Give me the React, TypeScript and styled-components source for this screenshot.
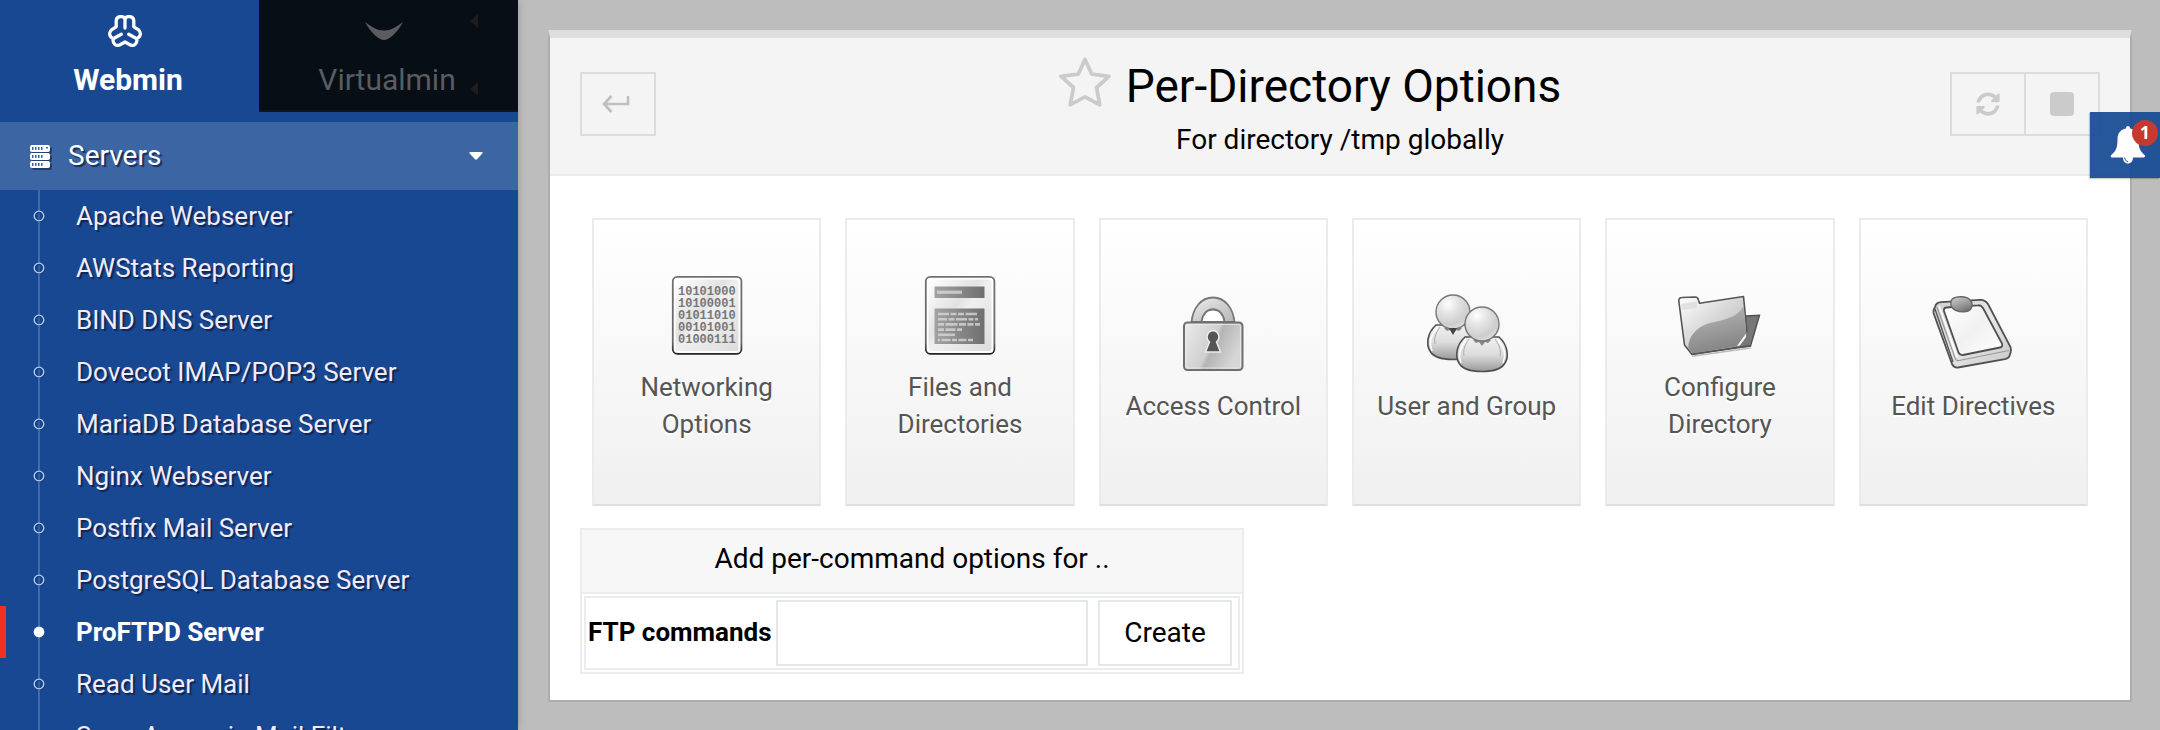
import React from "react";
import styled, { createGlobalStyle, css } from "styled-components";
import { FaSyncAlt } from "react-icons/fa";

const GlobalStyle = createGlobalStyle`
  *, *::before, *::after { box-sizing: border-box; }
  html, body { margin: 0; background: #bdbdbd; }
  body {
    font-family: Roboto, "Liberation Sans", sans-serif;
    font-size: 26px;
    line-height: 37px;
    color: #000;
  }
  button, input { font-family: inherit; }
  a { color: inherit; text-decoration: none; }
`;

const Page = styled.div`
  display: flex;
  align-items: flex-start;
  height: 100vh;
  overflow: hidden;
`;

/* ---------- sidebar ---------- */

const Sidebar = styled.nav`
  flex: 0 0 518px;
  height: 100vh;
  overflow: hidden;
  background: #194893;
  box-shadow: 0 0 8px rgba(0, 0, 0, 0.2);
`;

const Tabs = styled.div`
  display: flex;
  height: 122px;
  align-items: flex-start;
`;

const Tab = styled.button<{ $active?: boolean }>`
  position: relative;
  flex: 1;
  display: flex;
  flex-direction: column;
  align-items: center;
  height: 112px;
  padding: 12px 3px 0 0;
  border: 0;
  font-size: 30px;
  line-height: 40px;
  background: ${(p) => (p.$active ? "#194893" : "#070e15")};
  color: ${(p) => (p.$active ? "#fff" : "#5a5c5f")};
  font-weight: ${(p) => (p.$active ? 700 : 400)};
  ${(p) => !p.$active && css`border-bottom: 2px solid #10161d;`}
`;

const TabIcon = styled.span`
  display: flex;
  align-items: center;
  height: 38px;
  margin: 0 7px 10px 0;
`;

const TabMarks = styled.span`
  position: absolute;
  top: 14px;
  right: 40px;
  display: flex;
  flex-direction: column;
  gap: 54px;
`;

const Category = styled.a`
  display: flex;
  align-items: center;
  height: 68px;
  padding: 0 35px 0 30px;
  background: #3c65a4;
  color: #fff;
  font-size: 28px;
  text-shadow: 2px 2px 1px rgba(10, 24, 54, 0.7);

  & > span { flex: 1; margin-left: 18px; padding-bottom: 2px; }
`;

const ServerGlyph = styled.svg`
  filter: drop-shadow(2px 2px 0 rgba(10, 24, 54, 0.5));
`;

const Modules = styled.ul`
  margin: 0;
  padding: 0;
  list-style: none;
`;

const Module = styled.li<{ $current?: boolean }>`
  height: 52px;
  border-left: 6px solid ${(p) => (p.$current ? "#ee3124" : "transparent")};
  color: ${(p) => (p.$current ? "#fff" : "#f1ebfa")};
  font-weight: ${(p) => (p.$current ? 700 : 400)};
  text-shadow: ${(p) => (p.$current ? "none" : "2px 2px 1px rgba(10, 24, 54, 0.7)")};

  & > a {
    display: flex;
    align-items: center;
    height: 52px;
    padding-left: 27px;
    gap: 31px;
  }
`;

/* ---------- main panel ---------- */

const Main = styled.main`
  flex: 1;
  min-width: 0;
  padding: 30px 28px 28px 30px;
`;

const Panel = styled.section`
  background: #fff;
  border: 2px solid #adadad;
  border-top: 8px solid #dedede;
  border-radius: 2px;
`;

const PanelHeader = styled.header`
  display: grid;
  grid-template-columns: 1fr auto 1fr;
  align-items: start;
  min-height: 138px;
  padding: 0 30px;
  background: #f4f4f4;
  border-bottom: 2px solid #ebebeb;
`;

const Headings = styled.div`
  padding-top: 19px;
  text-align: center;
`;

const TitleRow = styled.div`
  display: flex;
  align-items: flex-start;
  gap: 15px;
  padding-right: 60px;
`;

const Title = styled.h1`
  margin: 2px 0 7px;
  font-size: 46px;
  line-height: 54px;
  font-weight: 400;
  white-space: nowrap;
`;

const Subtitle = styled.p`
  margin: 0;
  font-size: 28px;
  line-height: 40px;
`;

const StarButton = styled.button`
  display: flex;
  padding: 0;
  border: 0;
  background: none;
`;

const Tools = styled.div<{ $end?: boolean }>`
  display: flex;
  margin-top: 34px;
  justify-content: ${(p) => (p.$end ? "flex-end" : "flex-start")};
`;

const ToolButton = styled.button`
  display: flex;
  align-items: center;
  justify-content: center;
  width: 76px;
  height: 64px;
  padding: 0;
  border: 2px solid #dcdcdc;
  background: #f4f4f4;
  color: #cbcbcb;

  & + & { margin-left: -2px; }
`;

const BackButton = styled(ToolButton)`
  padding-right: 4px;
`;

const PanelBody = styled.div`
  padding: 42px 30px 26px;
`;

const Cards = styled.div`
  display: grid;
  grid-template-columns: repeat(6, 1fr);
  gap: 24px;
  margin: 0 12px 22px;
`;

const Card = styled.a`
  display: flex;
  flex-direction: column;
  align-items: center;
  justify-content: center;
  gap: 5px;
  height: 288px;
  padding: 0 20px 13px;
  border: 2px solid #ebebeb;
  border-bottom-color: #dedede;
  background: linear-gradient(#fff, #f0f0f0);
  color: #555;
  text-align: center;
  text-shadow: 0 2px 0 #fff;

  & > span { max-width: 180px; }
`;

const CommandForm = styled.form`
  width: max-content;
  border: 2px solid #ebeded;
`;

const FormTitle = styled.h2`
  margin: 0;
  padding: 9px 0 13px;
  border-bottom: 2px solid #ebeded;
  background: #f7f7f7;
  font-size: 28px;
  line-height: 40px;
  font-weight: 400;
  text-align: center;
`;

const FormRow = styled.div`
  display: flex;
  align-items: center;
  margin: 2px;
  padding: 2px 6px 2px 2px;
  border: 2px solid #ebeded;
`;

const FieldLabel = styled.label`
  width: 188px;
  padding-bottom: 2px;
  font-weight: 700;
  white-space: nowrap;
`;

const fieldBox = css`
  height: 66px;
  border: 2px solid #e6e8e8;
  border-radius: 0;
  background: #fff;
  font-size: 28px;
`;

const CommandInput = styled.input`
  ${fieldBox}
  width: 312px;
  margin-right: 10px;
  padding: 0 12px;
`;

const CreateButton = styled.button`
  ${fieldBox}
  width: 134px;
  padding: 0 0 2px;
  color: #000;
`;

const Alerts = styled.button`
  position: fixed;
  top: 112px;
  right: 0;
  display: flex;
  align-items: center;
  width: 70px;
  height: 66px;
  padding: 0 0 0 20px;
  border: 0;
  background: rgba(25, 77, 149, 0.94);
  box-shadow: -1px 1px 1px rgba(0, 0, 0, 0.2);
`;

const AlertCount = styled.span`
  position: absolute;
  top: 8px;
  right: 2px;
  width: 26px;
  height: 26px;
  border-radius: 50%;
  background: #c43a31;
  color: #fff;
  font: 700 18px/25px "Open Sans", "Noto Sans", sans-serif;
  text-align: center;
`;

/* ---------- drawings ---------- */

const WebminMark = () => (
  <svg width="34" height="32" viewBox="0 0 34 32" fill="none" stroke="currentColor" strokeWidth="3.300" strokeLinecap="round" strokeLinejoin="round" aria-hidden="true">
    <path d="M8.200 11.800V6C8.200 1 14.500.400 17 3.400C19.500.400 25.800 1 25.800 6V11.800L30.200 14.600C33.500 17 33 22 28.600 23.500C30 28 26 31.800 22 29.800L17 27L12 29.800C8 31.800 4 28 5.400 23.500C1 22 .500 17 3.800 14.600Z" />
    <path d="M17 4V13M13.300 19.300L6.500 23M20.700 19.300L27.500 23" />
  </svg>
);

const VirtualminMark = () => (
  <svg width="38" height="18" viewBox="0 0 38 18" aria-hidden="true">
    <path d="M0 0C7 5 12 8.500 19 8.500S31 5 38 0C32 11 24 18 19 18S6 11 0 0Z" fill="currentColor" />
  </svg>
);

const LeftMark = () => (
  <svg width="8" height="14" viewBox="0 0 8 14" aria-hidden="true">
    <path d="M8 0V14L0 7Z" fill="#1f1c1e" />
  </svg>
);

const ServerIcon = () => (
  <ServerGlyph width="20" height="23" viewBox="0 0 20 23" aria-hidden="true">
    {[0, 8, 16].map((y) => (
      <g key={y}>
        <rect x="0" y={y} width="20" height="7" rx="2" fill="#fff" />
        {[2, 5, 8, 11].map((x) => (
          <rect key={x} x={x} y={y + 2} width="1.500" height="3" fill="#3c65a4" />
        ))}
        {y === 0 && <circle cx="17" cy="2.800" r="1" fill="#3c65a4" />}
      </g>
    ))}
  </ServerGlyph>
);

const CaretIcon = () => (
  <svg width="14" height="8" viewBox="0 0 14 8" aria-hidden="true">
    <path d="M1 0H13Q14.200 .4 13.300 1.500L8 7.300Q7 8.200 6 7.300L.7 1.500Q-.2.4 1 0Z" fill="#fff" />
  </svg>
);

const Bullet = ({ filled }: { filled?: boolean }) => (
  <svg width="12" height="52" viewBox="0 0 12 52" aria-hidden="true">
    <path d="M6 0V20.500M6 31.500V52" stroke="#416bab" strokeWidth="2" />
    {filled ? (
      <circle cx="6" cy="26" r="5.400" fill="#fff" />
    ) : (
      <>
        <path d="M6 20V32" stroke="#2f5b9f" strokeWidth="2" />
        <circle cx="7" cy="27" r="4.800" fill="none" stroke="#143a78" />
        <circle cx="6" cy="26" r="4.800" fill="none" stroke="#bfd0ea" strokeWidth="1.300" />
      </>
    )}
  </svg>
);

const ReturnIcon = () => (
  <svg width="28" height="18" viewBox="0 0 28 18" fill="none" stroke="#bfbfbf" strokeWidth="2.600" aria-hidden="true">
    <path d="M26 1V9H2M9.500 1L2 9L9.500 17" />
  </svg>
);

const StopIcon = () => (
  <svg width="24" height="24" viewBox="0 0 24 24" aria-hidden="true">
    <rect width="24" height="24" rx="4" fill="currentColor" />
  </svg>
);

const StarIcon = () => (
  <svg width="52" height="50" viewBox="0 0 52 50" aria-hidden="true">
    <path
      d="M26 2.500L32.800 17.200L50 19.300L37.500 30.500L40.800 47.800L26 39.800L11.200 47.800L14.500 30.500L2 19.300L19.200 17.200Z"
      fill="none" stroke="#cbcbcb" strokeWidth="3.800" strokeLinejoin="round"
    />
  </svg>
);

const BellIcon = () => (
  <svg width="36" height="38" viewBox="0 0 36 38" aria-hidden="true">
    <path
      d="M18 0C19.300 0 20 1 20 2.500C25.500 3.500 28.500 7.500 28.500 13C28.500 22 30 25 35 29.500V30.500Q34.500 31.500 33.500 31.500H23C23 35 21 37.500 18 37.500S13 35 13 31.500H2Q1 31.500 .8 30.500V29.500C6 25 7.500 22 7.500 13C7.500 7.500 10.500 3.500 16 2.500C16 1 16.700 0 18 0Z"
      fill="#fff"
    />
    <path d="M14.500 31.500Q15 35 18 36" fill="none" stroke="#28579c" strokeWidth="1" />
  </svg>
);

const Art = ({ children }: { children: React.ReactNode }) => (
  <svg width="96" height="96" viewBox="0 0 96 96" aria-hidden="true">
    {children}
  </svg>
);

const Sheet = () => (
  <>
    <defs>
      <linearGradient id="sheetFill" x1="0" y1="0" x2="1" y2="1">
        <stop offset="0" stopColor="#fff" />
        <stop offset="0.400" stopColor="#e2e2e2" />
        <stop offset="0.500" stopColor="#efefef" />
        <stop offset="1" stopColor="#dcdcdc" />
      </linearGradient>
      <linearGradient id="sheetEdge" x1="0" y1="0" x2="0" y2="1">
        <stop offset="0" stopColor="#707070" />
        <stop offset="0.850" stopColor="#6a6a6a" />
        <stop offset="1" stopColor="#222" />
      </linearGradient>
    </defs>
    <rect x="13.800" y="8.800" width="68.600" height="77" rx="4.500" fill="#fff" stroke="url(#sheetEdge)" strokeWidth="1.800" />
    <rect x="16.500" y="11.500" width="63" height="71.500" rx="2.500" fill="url(#sheetFill)" />
  </>
);

const Digits = styled.g`
  font: 700 12px "Liberation Mono", monospace;
  fill: #777;
  text-shadow: none;
`;

const NetworkArt = () => (
  <Art>
    <Sheet />
    <Digits>
      {["10101000", "10100001", "01011010", "00101001", "01000111"].map((row, i) => (
        <text key={row} x="19" y={27 + i * 12}>{row}</text>
      ))}
    </Digits>
  </Art>
);

const FilesArt = () => (
  <Art>
    <defs>
      <linearGradient id="blockFill">
        <stop offset="0" stopColor="#a2a2a2" />
        <stop offset="1" stopColor="#6f6f6f" />
      </linearGradient>
    </defs>
    <Sheet />
    <rect x="22.500" y="18.500" width="50" height="11.500" fill="url(#blockFill)" />
    <rect x="22.500" y="40.500" width="50" height="35.500" fill="url(#blockFill)" />
    <g stroke="#dcdcdc" strokeWidth="2.600" opacity="0.750">
      <path d="M25 24.200H50" strokeWidth="3.200" />
      <path d="M26 46H65" strokeDasharray="11 1.500 6 1.500 6 1.500 12" />
      <path d="M26 51.200H66" strokeDasharray="9 1.500 6 1.500 11 1.500 5 1.500 6" />
      <path d="M26 56.400H68" strokeDasharray="6 1.500 12 1.500 7 1.500 6 1.500 6" />
      <path d="M26 61.600H50" strokeDasharray="6 1.500 10 1.500 5" />
      <path d="M26 66.800H43" />
      <path d="M26 72H62" strokeDasharray="2 1.500 9 1.500 5 1.500 8 1.500 5" />
    </g>
  </Art>
);

const LockArt = () => (
  <Art>
    <defs>
      <linearGradient id="lockFill" x1="0" y1="0" x2="1" y2="0.400">
        <stop offset="0" stopColor="#ececec" />
        <stop offset="0.550" stopColor="#cfcfcf" />
        <stop offset="0.620" stopColor="#b4b4b4" />
        <stop offset="1" stopColor="#d6d6d6" />
      </linearGradient>
      <linearGradient id="shackleFill" x1="0" y1="0" x2="1" y2="1">
        <stop offset="0" stopColor="#efefef" />
        <stop offset="0.500" stopColor="#cfcfcf" />
        <stop offset="1" stopColor="#b8b8b8" />
      </linearGradient>
    </defs>
    <path
      d="M26.500 35C28 21 36 10.500 48 10.500S68 21 69.500 35H59.500C58.500 27 54 22.500 48 22.500S37.500 27 36.500 35Z"
      fill="url(#shackleFill)" stroke="#777" strokeWidth="1.800"
    />
    <path d="M36.500 35C37.500 27 42 22.500 48 22.500S58.500 27 59.500 35Z" fill="#fff" stroke="#777" strokeWidth="1.800" />
    <rect x="19" y="35.500" width="58.500" height="47.500" rx="3.500" fill="url(#lockFill)" stroke="#707070" strokeWidth="2" />
    <rect x="21" y="37.500" width="54.500" height="43.500" rx="2" fill="none" stroke="#eee" opacity="0.700" />
    <path
      d="M48 43.500A6.500 6.500 0 0 1 51.500 55L55.500 65H40.500L44.500 55A6.500 6.500 0 0 1 48 43.500Z"
      fill="#555" stroke="#ececec" strokeWidth="1.500"
    />
  </Art>
);

const Person = ({ x, y }: { x: number; y: number }) => (
  <g transform={`translate(${x} ${y})`}>
    <path
      d="M-17 13C-26 21-27 33-23 39C-19 46-10 47.500 0 47.500S19 46 23 39C27 33 26 21 17 13Z"
      fill="url(#bodyFill)" stroke="#505050" strokeWidth="1.600"
    />
    <path d="M-16 16C-23 24-24 32-21 39M16 16C23 24 24 32 21 39" fill="none" stroke="#fff" strokeWidth="1.500" />
    <path d="M-13 15C-18 22-19 27-18 32M13 15C18 22 19 27 18 32" fill="none" stroke="#aaa" />
    <path d="M-9 16L-6 19L-3 18L0 22L3 18L6 19L9 16Z" fill="#888" />
    <circle cx="0" cy="0" r="17" fill="url(#headFill)" stroke="#777" strokeWidth="1.400" />
  </g>
);

const UsersArt = () => (
  <Art>
    <defs>
      <radialGradient id="headFill" cx="0.350" cy="0.250" r="0.900">
        <stop offset="0" stopColor="#fff" />
        <stop offset="0.300" stopColor="#e6e6e6" />
        <stop offset="0.700" stopColor="#cdcdcd" />
        <stop offset="1" stopColor="#ededed" />
      </radialGradient>
      <linearGradient id="bodyFill" x1="0" y1="0" x2="0" y2="1">
        <stop offset="0" stopColor="#f2f2f2" />
        <stop offset="0.500" stopColor="#ddd" />
        <stop offset="1" stopColor="#9a9a9a" />
      </linearGradient>
    </defs>
    <Person x={34} y={25} />
    <path d="M30 41H38L34 48Z" fill="#444" />
    <Person x={63} y={37} />
  </Art>
);

const FolderArt = () => (
  <Art>
    <defs>
      <linearGradient id="folderLight" x1="0" y1="0" x2="1" y2="1">
        <stop offset="0" stopColor="#fff" />
        <stop offset="1" stopColor="#a8a8a8" />
      </linearGradient>
      <linearGradient id="folderDark" x1="0" y1="0" x2="0.300" y2="1">
        <stop offset="0" stopColor="#bcbcbc" />
        <stop offset="1" stopColor="#858585" />
      </linearGradient>
    </defs>
    <path d="M74 48L87.500 47.300L78.500 78L62 79.500Z" fill="#777" stroke="#505050" strokeWidth="1.400" />
    <path
      d="M6.800 33Q6.800 29.500 10 29.500L23 29Q26 29 26.500 32L27.500 35.300L71.500 28.500L75 64L64 79.500L20 86.500L12.500 77Z"
      fill="url(#folderLight)" stroke="#555" strokeWidth="1.600" strokeLinejoin="round"
    />
    <path d="M71.500 38C66 49 54 51.500 38 55C24 59 16 69 16.300 80L20.500 85.500L63.500 78.500L74.200 64Z" fill="url(#folderDark)" />
    <path d="M9 36L25 33.500V40L10 42Z" fill="#d9d9d9" opacity="0.700" />
    <path d="M74.500 64L64 78.500L68 78L74.500 69Z" fill="#f4f4f4" stroke="#777" strokeWidth="0.800" />
    <path d="M20 86.300L78.500 78" stroke="#555" strokeWidth="1.500" />
    <path d="M20 88.300L78.500 80" stroke="#bbb" strokeWidth="1.500" />
  </Art>
);

const ClipboardArt = () => (
  <Art>
    <defs>
      <linearGradient id="boardFill" x1="0" y1="0" x2="1" y2="1">
        <stop offset="0" stopColor="#cfcfcf" />
        <stop offset="0.500" stopColor="#e8e8e8" />
        <stop offset="1" stopColor="#c6c6c6" />
      </linearGradient>
      <linearGradient id="paperFill" x1="0" y1="0" x2="1" y2="1">
        <stop offset="0" stopColor="#fff" />
        <stop offset="0.500" stopColor="#f1f1f1" />
        <stop offset="1" stopColor="#fff" />
      </linearGradient>
      <linearGradient id="clipFill" x1="0" y1="0" x2="0.500" y2="1">
        <stop offset="0" stopColor="#d2d2d2" />
        <stop offset="1" stopColor="#777" />
      </linearGradient>
    </defs>
    <path
      d="M10 20Q11 15.500 16 15.200L55 12.800Q60 12.500 63 17L85.500 60Q86.500 63 85.500 66L84 70Q83 71.500 80 72.200L33 80.500Q29 81 27 77L8.500 26Q8 23 10 20Z"
      fill="url(#boardFill)" stroke="#505050" strokeWidth="1.800"
    />
    <path d="M12 20L30 71Q31 74 34 73.500L84 63.500" fill="none" stroke="#999" strokeWidth="1.200" />
    <path d="M10 22L28 75" fill="none" stroke="#555" strokeWidth="1.400" />
    <path d="M14 19L32 70" fill="none" stroke="#fff" strokeWidth="1.600" />
    <path
      d="M21 20.500L53 18.300Q56 18 58 21L77 56.500Q78 60 75 60.500L38 68Q35 68.500 33.500 65.500L19 24Q18.500 21 21 20.500Z"
      fill="url(#paperFill)" stroke="#505050" strokeWidth="1.800"
    />
    <path d="M26 14C28 8.500 42 8.500 45 13C49 17 47 24 41 24.500C34 26 27 23 26 18Z" fill="url(#clipFill)" stroke="#666" strokeWidth="1.300" />
  </Art>
);

/* ---------- page ---------- */

const modules = [
  "Apache Webserver",
  "AWStats Reporting",
  "BIND DNS Server",
  "Dovecot IMAP/POP3 Server",
  "MariaDB Database Server",
  "Nginx Webserver",
  "Postfix Mail Server",
  "PostgreSQL Database Server",
  "ProFTPD Server",
  "Read User Mail",
  "SpamAssassin Mail Filter",
];

const cards = [
  { label: "Networking Options", art: <NetworkArt /> },
  { label: "Files and Directories", art: <FilesArt /> },
  { label: "Access Control", art: <LockArt /> },
  { label: "User and Group", art: <UsersArt /> },
  { label: "Configure Directory", art: <FolderArt /> },
  { label: "Edit Directives", art: <ClipboardArt /> },
];

export default function App() {
  return (
    <>
      <GlobalStyle />
      <Page>
        <Sidebar>
          <Tabs>
            <Tab type="button" $active>
              <TabIcon><WebminMark /></TabIcon>
              Webmin
            </Tab>
            <Tab type="button">
              <TabIcon><VirtualminMark /></TabIcon>
              Virtualmin
              <TabMarks><LeftMark /><LeftMark /></TabMarks>
            </Tab>
          </Tabs>
          <Category href="#servers">
            <ServerIcon />
            <span>Servers</span>
            <CaretIcon />
          </Category>
          <Modules>
            {modules.map((name) => {
              const current = name === "ProFTPD Server";
              return (
                <Module key={name} $current={current}>
                  <a href="#module">
                    <Bullet filled={current} />
                    {name}
                  </a>
                </Module>
              );
            })}
          </Modules>
        </Sidebar>
        <Main>
          <Panel>
            <PanelHeader>
              <Tools>
                <BackButton type="button" aria-label="Return"><ReturnIcon /></BackButton>
              </Tools>
              <Headings>
                <TitleRow>
                  <StarButton type="button" aria-label="Add to favorites"><StarIcon /></StarButton>
                  <Title>Per-Directory Options</Title>
                </TitleRow>
                <Subtitle>For directory /tmp globally</Subtitle>
              </Headings>
              <Tools $end>
                <ToolButton type="button" aria-label="Apply changes"><FaSyncAlt size={24} /></ToolButton>
                <ToolButton type="button" aria-label="Stop server"><StopIcon /></ToolButton>
              </Tools>
            </PanelHeader>
            <PanelBody>
              <Cards>
                {cards.map((card) => (
                  <Card key={card.label} href="#options">
                    {card.art}
                    <span>{card.label}</span>
                  </Card>
                ))}
              </Cards>
              <CommandForm>
                <FormTitle>Add per-command options for ..</FormTitle>
                <FormRow>
                  <FieldLabel htmlFor="commands">FTP commands</FieldLabel>
                  <CommandInput id="commands" type="text" />
                  <CreateButton type="button">Create</CreateButton>
                </FormRow>
              </CommandForm>
            </PanelBody>
          </Panel>
        </Main>
        <Alerts type="button" aria-label="Notifications">
          <BellIcon />
          <AlertCount>1</AlertCount>
        </Alerts>
      </Page>
    </>
  );
}
